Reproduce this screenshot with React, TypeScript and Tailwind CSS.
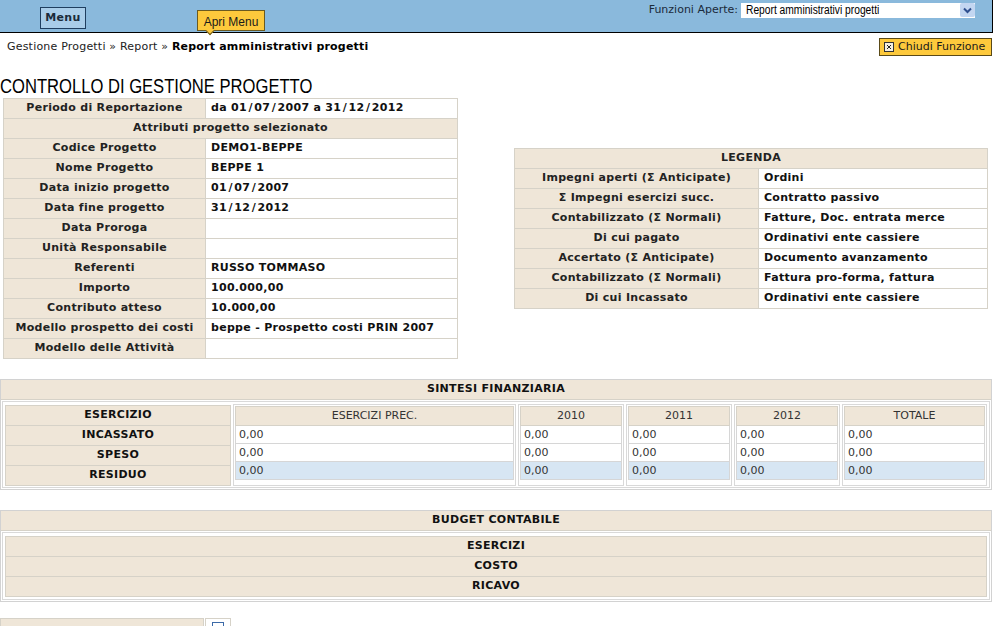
// Report amministrativi progetti — controllo di gestione (old-school admin page)

const MAIN_ROWS: { label: string; value: string }[] = [
  { label: "Codice Progetto", value: "DEMO1-BEPPE" },
  { label: "Nome Progetto", value: "BEPPE 1" },
  { label: "Data inizio progetto", value: "01/07/2007" },
  { label: "Data fine progetto", value: "31/12/2012" },
  { label: "Data Proroga", value: "" },
  { label: "Unità Responsabile", value: "" },
  { label: "Referenti", value: "RUSSO TOMMASO" },
  { label: "Importo", value: "100.000,00" },
  { label: "Contributo atteso", value: "10.000,00" },
  { label: "Modello prospetto dei costi", value: "beppe - Prospetto costi PRIN 2007" },
  { label: "Modello delle Attività", value: "" },
];

const LEGENDA: { label: string; value: string }[] = [
  { label: "Impegni aperti (Σ Anticipate)", value: "Ordini" },
  { label: "Σ Impegni esercizi succ.", value: "Contratto passivo" },
  { label: "Contabilizzato (Σ Normali)", value: "Fatture, Doc. entrata merce" },
  { label: "Di cui pagato", value: "Ordinativi ente cassiere" },
  { label: "Accertato (Σ Anticipate)", value: "Documento avanzamento" },
  { label: "Contabilizzato (Σ Normali)", value: "Fattura pro-forma, fattura" },
  { label: "Di cui Incassato", value: "Ordinativi ente cassiere" },
];

const SINTESI_COLS: { title: string; w: string }[] = [
  { title: "ESERCIZI PREC.", w: "w-[283px]" },
  { title: "2010", w: "w-[106px]" },
  { title: "2011", w: "w-[106px]" },
  { title: "2012", w: "w-[106px]" },
  { title: "TOTALE", w: "flex-1" },
];

// Verdana's slash is much wider than DejaVu's; pad it so dates keep their width
function Wide({ text }: { text: string }) {
  const parts = text.split("/");
  return (
    <>
      {parts.map((p, i) => (
        <span key={i}>
          {i > 0 && <span className="px-[1.5px]">/</span>}
          {p}
        </span>
      ))}
    </>
  );
}

function SelectArrow() {
  return (
    <span className="flex h-[14px] w-[15px] items-center justify-center rounded-[2px] bg-[#c3d6f1]">
      <svg width="9" height="7" viewBox="0 0 9 7">
        <path d="M1 1.5 L4.5 5 L8 1.5" fill="none" stroke="#2f4f8f" strokeWidth="2" />
      </svg>
    </span>
  );
}

function ValueCol({ title, w }: { title: string; w: string }) {
  return (
    <div className={`${w} border border-[#d9d9d9] px-[1px] pt-[1px]`}>
      <div className="h-[20px] border border-[#d6d2c8] bg-[#efe6d8] text-center leading-[18px] text-[#333]">{title}</div>
      <div className="h-[18px] border-x border-b border-[#d6d6d6] bg-white pl-[3px] leading-[17px] text-[#333]">0,00</div>
      <div className="h-[18px] border-x border-b border-[#d6d6d6] bg-white pl-[3px] leading-[17px] text-[#333]">0,00</div>
      <div className="h-[18px] border-x border-b border-[#d6d6d6] bg-[#d7e6f3] pl-[3px] leading-[17px] text-[#333]">0,00</div>
    </div>
  );
}

export default function App() {
  return (
    <div className="min-h-[626px] w-[1007px] bg-white font-['DejaVu_Sans',Verdana,sans-serif] text-[11px] text-[#111]">
      {/* top bar */}
      <div className="relative flex h-[33px] w-[993px] items-start border-b border-r border-black bg-[#8ab9dc]">
        <div className="ml-[40px] mt-[7px] flex h-[22px] w-[46px] items-center justify-center border border-[#1f3e5f] bg-[#a9cde9] font-bold tracking-[0.3px] text-[#1b2b3b]">
          Menu
        </div>
        <div className="ml-auto mr-[17px] mt-[2px] flex items-center">
          <span className="mr-[3px] text-[#1a2a3a]">Funzioni Aperte:</span>
          <div className="flex h-[15px] w-[234px] items-center justify-between overflow-hidden bg-white pl-[5px]">
            <span className="origin-left scale-x-[0.82] whitespace-nowrap font-['Liberation_Sans',Arial,sans-serif] text-[12.5px] leading-[15px] text-black">
              Report amministrativi progetti
            </span>
            <SelectArrow />
          </div>
        </div>
        {/* tooltip */}
        <div className="absolute left-[197px] top-[10px] flex h-[21px] w-[68px] items-end justify-center border border-[#6b5a20] bg-[#fdc93c] pb-[1px] font-['Liberation_Sans',Arial,sans-serif] text-[12px] leading-[14px] text-[#1a1a1a]">
          <span>Apri Menu</span>
          <span className="absolute -bottom-[4px] left-[9px] h-[6px] w-[6px] rotate-45 border-b border-r border-[#6b5a20] bg-[#fdc93c]" />
        </div>
      </div>

      {/* breadcrumb */}
      <div className="mt-[5px] flex h-[18px] w-[992px] items-center justify-between pl-[7px]">
        <div className="mt-[1px] tracking-[0.2px] text-[#222]">
          Gestione Progetti » Report » <span className="font-bold text-black">Report amministrativi progetti</span>
        </div>
        <div className="flex h-[18px] w-[113px] items-center gap-[4px] border border-[#5a4a18] bg-[#fdc93c] pl-[4px] text-[#1a1a1a]">
          <svg width="10" height="10" viewBox="0 0 10 10">
            <rect x="0.5" y="0.5" width="9" height="9" fill="#f4eee0" stroke="#333" />
            <path d="M3 3 L7 7 M7 3 L3 7" stroke="#222" strokeWidth="1" />
          </svg>
          Chiudi Funzione
        </div>
      </div>

      {/* title + tables */}
      <div className="mt-[19px] flex items-start">
        <div>
          <h1 className="h-[22px] origin-left scale-x-[0.83] whitespace-nowrap font-['Liberation_Sans',Arial,sans-serif] text-[20px] font-normal leading-[22px] text-black">
            CONTROLLO DI GESTIONE PROGETTO
          </h1>
          <div className="ml-[3px] mt-[1px] w-[455px] border-l border-t border-[#d6d2c8] font-bold tracking-[0.3px]">
            <div className="flex h-[20px]">
              <div className="flex w-[202px] items-center justify-center border-b border-r border-[#d6d2c8] bg-[#efe6d8] text-[#222]">
                Periodo di Reportazione
              </div>
              <div className="flex flex-1 items-center border-b border-r border-[#d6d2c8] bg-white pl-[5px]">
                <Wide text="da 01/07/2007 a 31/12/2012" />
              </div>
            </div>
            <div className="flex h-[20px] items-center justify-center border-b border-r border-[#d6d2c8] bg-[#efe6d8] text-[#222]">
              Attributi progetto selezionato
            </div>
            {MAIN_ROWS.map((r) => (
              <div key={r.label} className="flex h-[20px]">
                <div className="flex w-[202px] items-center justify-center border-b border-r border-[#d6d2c8] bg-[#efe6d8] text-[#222]">
                  {r.label}
                </div>
                <div className="flex flex-1 items-center border-b border-r border-[#d6d2c8] bg-white pl-[5px]">
                  <Wide text={r.value} />
                </div>
              </div>
            ))}
          </div>
        </div>

        <div className="ml-[56px] mt-[73px] w-[474px] border-l border-t border-[#d6d2c8] font-bold tracking-[0.3px]">
          <div className="flex h-[20px] items-center justify-center border-b border-r border-[#d6d2c8] bg-[#efe6d8] text-[#222]">
            LEGENDA
          </div>
          {LEGENDA.map((r, i) => (
            <div key={i} className="flex h-[20px]">
              <div className="flex w-[244px] items-center justify-center border-b border-r border-[#d6d2c8] bg-[#efe6d8] text-[#222]">
                {r.label}
              </div>
              <div className="flex flex-1 items-center border-b border-r border-[#d6d2c8] bg-white pl-[5px]">{r.value}</div>
            </div>
          ))}
        </div>
      </div>

      {/* sintesi finanziaria */}
      <div className="mt-[20px] w-[992px] border border-[#d2d2d2]">
        <div className="flex h-[20px] items-center justify-center border-b border-[#d6d2c8] bg-[#efe6d8] font-bold tracking-[0.3px]">
          SINTESI FINANZIARIA
        </div>
        <div className="p-[1px]">
          <div className="flex gap-[2px] border border-[#d9d9d9] px-[2px] pb-[1px] pt-[2px]">
            <div className="mt-[1px] w-[226px] self-start border-l border-t border-[#d6d2c8] bg-[#efe6d8] font-bold tracking-[0.3px]">
              {["ESERCIZIO", "INCASSATO", "SPESO", "RESIDUO"].map((l) => (
                <div key={l} className="flex h-[20px] items-center justify-center border-b border-r border-[#d6d2c8]">
                  {l}
                </div>
              ))}
            </div>
            {SINTESI_COLS.map((c) => (
              <ValueCol key={c.title} title={c.title} w={c.w} />
            ))}
          </div>
        </div>
      </div>

      {/* budget contabile */}
      <div className="mt-[20px] w-[992px] border border-[#d2d2d2]">
        <div className="flex h-[20px] items-center justify-center border-b border-[#d6d2c8] bg-[#efe6d8] font-bold tracking-[0.3px]">
          BUDGET CONTABILE
        </div>
        <div className="p-[1px]">
          <div className="border border-[#d9d9d9] px-[2px] pb-[2px] pt-[3px]">
            <div className="border-l border-t border-[#d6d2c8] bg-[#efe6d8] font-bold tracking-[0.3px]">
              {["ESERCIZI", "COSTO", "RICAVO"].map((l) => (
                <div key={l} className="flex h-[20px] items-center justify-center border-b border-r border-[#d6d2c8]">
                  {l}
                </div>
              ))}
            </div>
          </div>
        </div>
      </div>

      {/* next row, cut off by the window */}
      <div className="mt-[16px] flex h-[22px]">
        <div className="w-[204px] border border-[#d6d2c8] bg-[#efe6d8]" />
        <div className="ml-[1px] flex w-[26px] justify-center border border-[#d6d2c8] pt-[3px]">
          <span className="h-[12px] w-[12px] border border-[#3c6aa8] bg-white" />
        </div>
      </div>
    </div>
  );
}
